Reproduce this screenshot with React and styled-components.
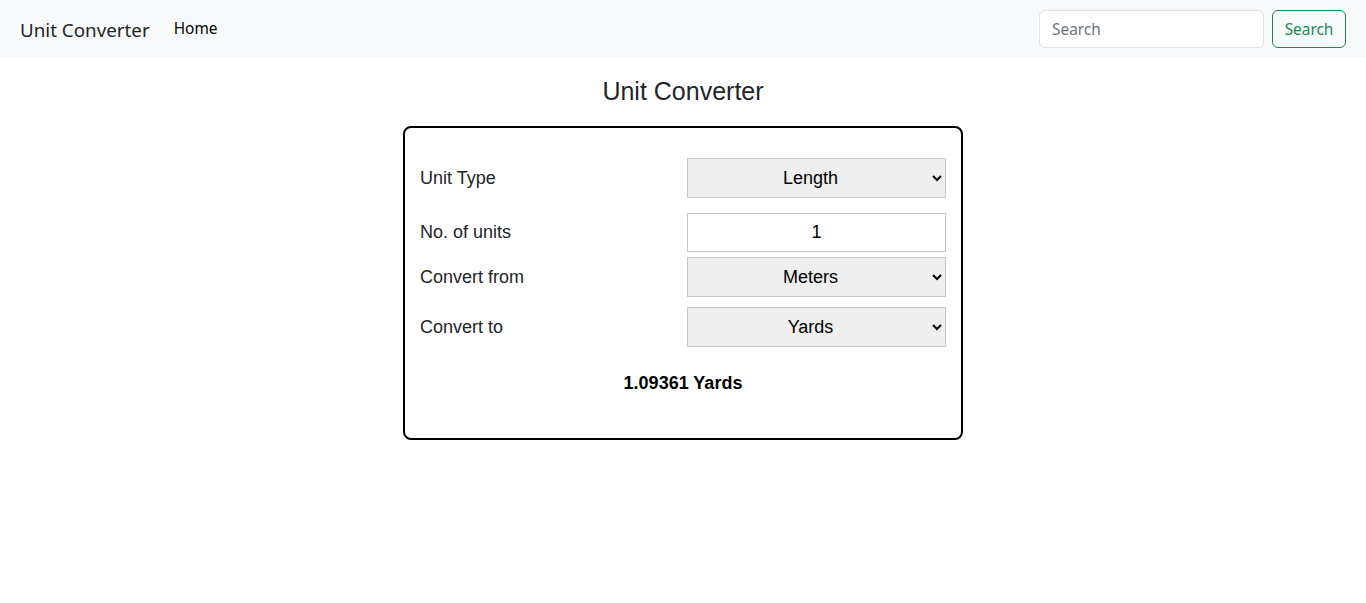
import React, { useState } from "react";
import styled, { createGlobalStyle } from "styled-components";

const GlobalStyle = createGlobalStyle`
  body {
    margin: 0;
    background: #fff;
    font-family: "Liberation Sans", Arial, sans-serif;
    color: #212529;
  }
`;

const factors = { Meters: 1, Yards: 0.9144, Feet: 0.3048, Inches: 0.0254 };

const App = () => {
  const [units, setUnits] = useState(1);
  const [from, setFrom] = useState("Meters");
  const [to, setTo] = useState("Yards");

  const result = ((units * factors[from]) / factors[to]).toFixed(5);

  return (
    <>
      <GlobalStyle />
      <NavBar>
        <NavLeft>
          <Brand>Unit Converter</Brand>
          <NavLink>Home</NavLink>
        </NavLeft>
        <SearchForm onSubmit={(e) => e.preventDefault()}>
          <SearchInput placeholder="Search" />
          <SearchButton type="submit">Search</SearchButton>
        </SearchForm>
      </NavBar>
      <Main>
        <Title>Unit Converter</Title>
        <Card>
          <Row $mb={15}>
            <Label>Unit Type</Label>
            <Select defaultValue="Length">
              <option>Length</option>
              <option>Weight</option>
            </Select>
          </Row>
          <Row $mb={5}>
            <Label>No. of units</Label>
            <NumberInput
              value={units}
              onChange={(e) => setUnits(e.target.value)}
            />
          </Row>
          <Row $mb={10}>
            <Label>Convert from</Label>
            <Select value={from} onChange={(e) => setFrom(e.target.value)}>
              {Object.keys(factors).map((k) => (
                <option key={k}>{k}</option>
              ))}
            </Select>
          </Row>
          <Row $mb={0}>
            <Label>Convert to</Label>
            <Select value={to} onChange={(e) => setTo(e.target.value)}>
              {Object.keys(factors).map((k) => (
                <option key={k}>{k}</option>
              ))}
            </Select>
          </Row>
          <Result>
            {parseFloat(result)} {to}
          </Result>
        </Card>
      </Main>
    </>
  );
};

export default App;

const NavBar = styled.nav`
  display: flex;
  align-items: center;
  justify-content: space-between;
  height: 57px;
  padding: 0 20px;
  background-color: #f8f9fa;
  font-family: "Noto Sans", sans-serif;
`;

const NavLeft = styled.div`
  display: flex;
  align-items: center;
`;

const Brand = styled.span`
  font-size: 18.8px;
  color: #212529;
  margin-right: 24px;
  margin-top: 3px;
`;

const NavLink = styled.span`
  font-size: 15.4px;
  color: #000;
`;

const SearchForm = styled.form`
  display: flex;
  gap: 8px;
`;

const SearchInput = styled.input`
  box-sizing: border-box;
  width: 225px;
  height: 38px;
  padding: 8px 12px 6px;
  font-family: "Noto Sans", sans-serif;
  font-size: 15.4px;
  color: #212529;
  border: 1px solid #dee2e6;
  border-radius: 6px;
  background: #fff;
  outline: none;

  &::placeholder {
    color: #6c757d;
  }
`;

const SearchButton = styled.button`
  box-sizing: border-box;
  width: 74px;
  height: 38px;
  padding: 8px 0 6px;
  font-family: "Noto Sans", sans-serif;
  font-size: 15.4px;
  color: #198754;
  background: transparent;
  border: 1px solid #198754;
  border-radius: 6px;
  cursor: pointer;
`;

const Main = styled.main`
  display: flex;
  flex-direction: column;
  align-items: center;
`;

const Title = styled.h1`
  margin: 19px 0 20px;
  font-size: 25px;
  font-weight: 400;
  line-height: 30px;
  color: #212529;
`;

const Card = styled.div`
  box-sizing: border-box;
  width: 560px;
  height: 314px;
  padding: 30px 15px 0;
  border: 2px solid #000;
  border-radius: 8px;
`;

const Row = styled.div`
  display: grid;
  grid-template-columns: 267px 259px;
  align-items: center;
  margin-bottom: ${(props) => props.$mb}px;
`;

const Label = styled.label`
  font-size: 18px;
  color: #212529;
`;

const Select = styled.select`
  box-sizing: border-box;
  width: 259px;
  height: 40px;
  font-family: "Liberation Sans", Arial, sans-serif;
  font-size: 18px;
  text-align: center;
  text-align-last: center;
  color: #000;
  background-color: #efefef;
  border: 1px solid #c8c8c8;
  border-radius: 0;
`;

const NumberInput = styled.input`
  box-sizing: border-box;
  width: 259px;
  height: 39px;
  font-family: "Liberation Sans", Arial, sans-serif;
  font-size: 18px;
  text-align: center;
  color: #000;
  background: #fff;
  border: 1px solid #c8c8c8;
  outline: none;
`;

const Result = styled.div`
  margin-top: 26px;
  text-align: center;
  font-size: 18px;
  font-weight: 700;
  color: #000;
`;
